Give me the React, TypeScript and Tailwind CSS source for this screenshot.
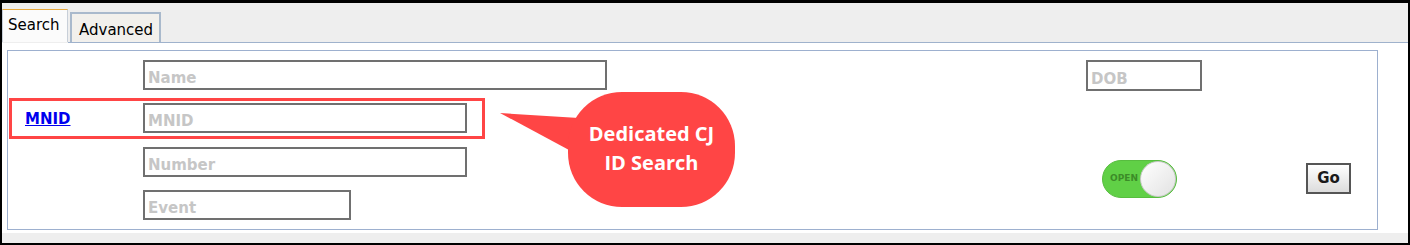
import React from 'react';

const fieldCls =
  "h-[30px] border-2 border-[#707070] bg-white px-[3px] pt-[6px] pb-0 text-[15px] leading-[18px] font-bold outline-none placeholder:text-[#c6c6c6] font-['DejaVu_Sans',sans-serif]";

function Field({ placeholder, width }: { placeholder: string; width: string }) {
  return <input readOnly placeholder={placeholder} className={`${fieldCls} ${width}`} />;
}

function Toggle() {
  return (
    <div className="flex h-[38px] w-[75px] items-center rounded-full border border-[#57bd3f] bg-[#60d046] pl-[7px]">
      <span className="text-[9px] font-bold text-[#3c8c28] font-['DejaVu_Sans',sans-serif]">OPEN</span>
      <span className="ml-auto h-[36px] w-[36px] rounded-full border border-[#c9c9c9] bg-gradient-to-br from-white to-[#e2e2e2]" />
    </div>
  );
}

export default function App() {
  return (
    <div className="relative flex h-[245px] w-[1410px] flex-col border-x-2 border-b-2 border-t-[3px] border-black bg-[#eeeeee]">
      {/* tab strip */}
      <div className="flex h-[39px] items-end gap-[2px] font-['DejaVu_Sans',sans-serif] text-[15px]">
        <div className="flex h-[33px] w-[66px] items-start border-x border-t border-x-[#c8cfd8] border-t-[#e8a93c] bg-[#fbfbfb] pl-[5px] pt-[4px] text-black">
          Search
        </div>
        <div className="flex h-[30px] w-[91px] items-start border-2 border-b-0 border-[#a9b9cc] bg-[#f2f0ec] pl-[7px] pt-[5px] text-black">
          Advanced
        </div>
      </div>
      <div className="ml-[66px] h-px bg-[#9fb2cc]" />

      {/* content */}
      <div className="h-[190px] bg-white pl-[5px] pt-[7px]">
        <div className="flex h-[180px] w-[1371px] border border-[#9db0cf] pt-[9px]">
          <div className="flex w-[1078px] flex-col gap-[13px]">
            <div className="flex items-center">
              <div className="w-[135px]" />
              <Field placeholder="Name" width="w-[464px]" />
            </div>
            <div className="flex items-center">
              <div className="w-[135px] pl-[17px] pt-px">
                <a href="#" className="text-[15px] font-bold text-[#0000ee] underline font-['DejaVu_Sans',sans-serif]">
                  MNID
                </a>
              </div>
              <Field placeholder="MNID" width="w-[324px]" />
            </div>
            <div className="mt-px flex items-center">
              <div className="w-[135px]" />
              <Field placeholder="Number" width="w-[324px]" />
            </div>
            <div className="flex items-center">
              <div className="w-[135px]" />
              <Field placeholder="Event" width="w-[208px]" />
            </div>
          </div>
          <div className="flex flex-col">
            <Field placeholder="DOB" width="w-[116px] h-[31px]" />
            <div className="mt-[69px] flex items-start">
              <div className="ml-[16px]">
                <Toggle />
              </div>
              <button className="ml-[129px] mt-[3px] h-[31px] w-[45px] border-2 border-[#555] bg-gradient-to-b from-white to-[#dcdcdc] text-[15px] font-bold text-[#1a1a1a] font-['DejaVu_Sans',sans-serif]">
                Go
              </button>
            </div>
          </div>
        </div>
      </div>
      <div className="h-[10px] bg-[#eeeeee]" />

      {/* annotation: highlight box */}
      <div className="absolute left-[7px] top-[95px] h-[41px] w-[476px] border-[3px] border-[#ff4545]" />

      {/* annotation: callout */}
      <svg className="absolute left-[493px] top-[85px]" width="245" height="122" viewBox="0 0 245 122">
        <path d="M5 25 L84 30 L74 62 Z" fill="#ff4545" />
        <rect x="73" y="4" width="167" height="115" rx="54" ry="54" fill="#ff4545" />
      </svg>
      <div className="absolute left-[566px] top-[87px] flex h-[115px] w-[167px] flex-col items-center justify-center text-[20px] font-bold leading-[29px] text-white font-['Open_Sans',sans-serif]">
        <span>Dedicated CJ</span>
        <span>ID Search</span>
      </div>
    </div>
  );
}
